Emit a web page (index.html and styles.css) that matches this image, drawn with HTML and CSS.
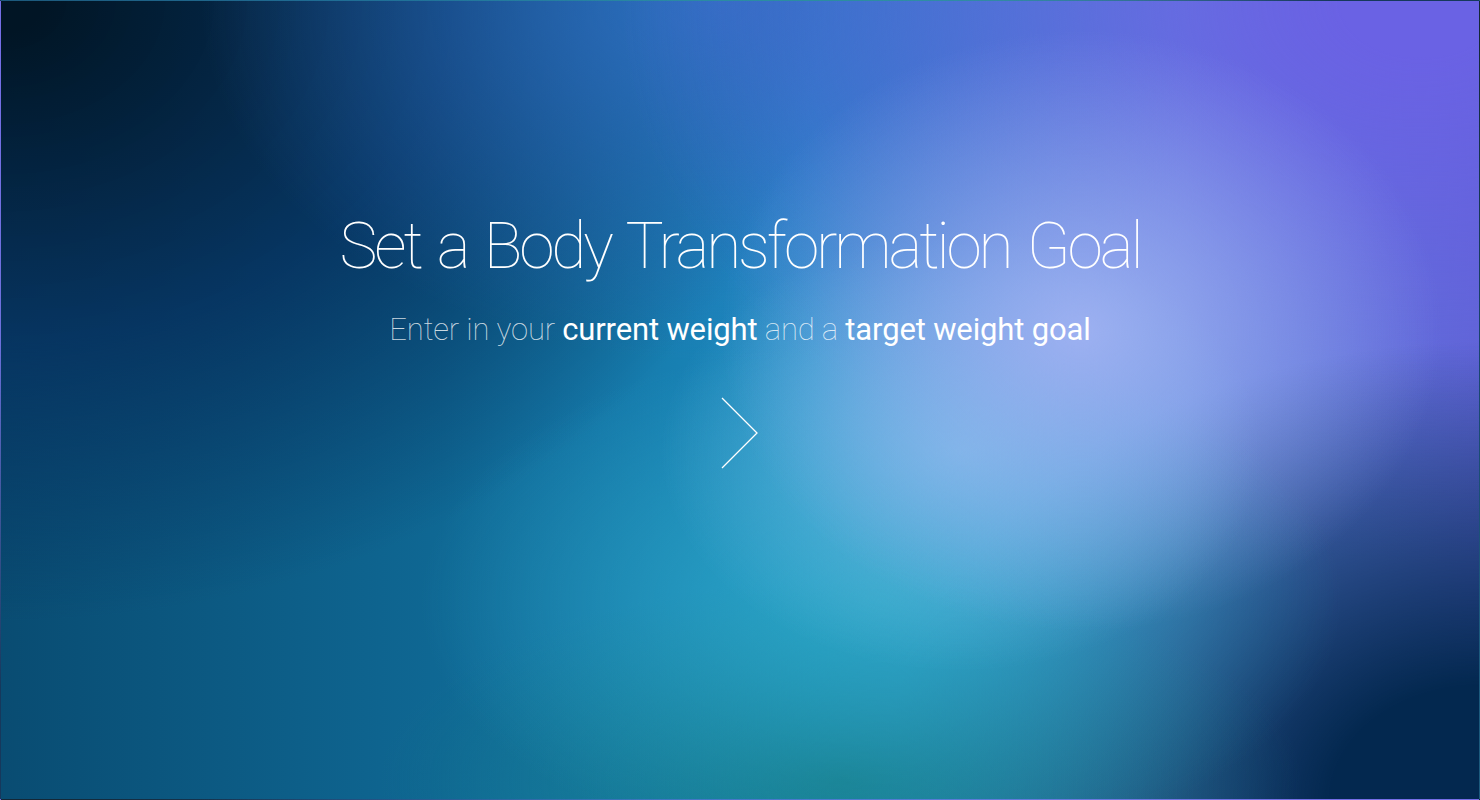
FILE: index.html
```html
<!DOCTYPE html>
<html lang="en">
<head>
<meta charset="utf-8">
<title>Set a Body Transformation Goal</title>
<link rel="stylesheet" href="styles.css">
</head>
<body>
<main class="stage">
  <h1 class="title">Set a Body Transformation Goal</h1>
  <p class="subtitle">Enter in your <strong>current weight</strong> and a <strong>target weight goal</strong></p>
  <button class="next" type="button" aria-label="Next">
    <svg width="40" height="76" viewBox="0 0 40 76" aria-hidden="true">
      <polyline points="2,2 37,37 2,72" fill="none" stroke="#fff" stroke-width="1.3"/>
    </svg>
  </button>
</main>
</body>
</html>
```
FILE: styles.css
```css
html, body {
  margin: 0;
  padding: 0;
  height: 100%;
}
body {
  font-family: Roboto, "Liberation Sans", sans-serif;
  color: #fff;
  overflow: hidden;
}
.stage {
  box-sizing: border-box;
  width: 1480px;
  height: 800px;
  border: 1px solid rgba(255,255,255,0.08);
  display: flex;
  flex-direction: column;
  align-items: center;
  padding-top: 206px;
  background:
    radial-gradient(ellipse 360px 300px at 1080px 330px, rgba(160,178,242,0.95), rgba(160,178,242,0) 100%),
    radial-gradient(ellipse 300px 220px at 960px 450px, rgba(120,190,232,0.8), rgba(120,190,232,0)),
    radial-gradient(ellipse 460px 260px at 880px 600px, rgba(45,168,198,0.9), rgba(45,168,198,0)),
    radial-gradient(ellipse 460px 200px at 840px 780px, rgba(20,120,132,0.95), rgba(20,120,132,0)),
    radial-gradient(ellipse 600px 460px at 1480px 800px, #03284f 25%, rgba(3,40,79,0)),
    radial-gradient(ellipse 800px 560px at 1420px 0px, #6a62e4 10%, rgba(106,98,228,0)),
    radial-gradient(ellipse 520px 360px at 720px 0px, rgba(48,110,195,0.95), rgba(48,110,195,0)),
    radial-gradient(ellipse 820px 620px at 0px 0px, #011525 5%, rgba(6,50,95,0.9) 55%, rgba(6,50,95,0)),
    linear-gradient(90deg, #094c72 0%, #0f6894 30%, #1d8ec4 55%, #5a8ed8 80%, #5a66d0 100%);
}
.title {
  margin: 0;
  font-weight: 100;
  font-size: 64px;
  line-height: 80px;
  letter-spacing: -3.1px;
  word-spacing: 4px;
}
.subtitle {
  margin: 23px 0 0;
  font-weight: 100;
  font-size: 31px;
  line-height: 40px;
  letter-spacing: -0.15px;
  color: rgba(255,255,255,0.8);
}
.subtitle strong {
  font-weight: 400;
  color: #fff;
}
.next {
  margin-top: 46px;
  padding: 0;
  border: 0;
  background: none;
  cursor: pointer;
  line-height: 0;
}
```
